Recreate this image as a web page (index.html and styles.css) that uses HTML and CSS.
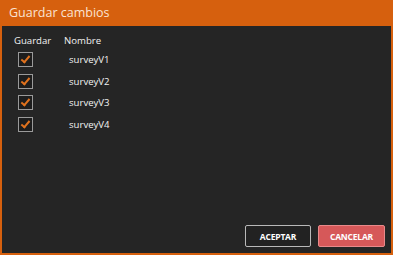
FILE: index.html
```html
<!DOCTYPE html>
<html lang="es">
<head>
  <meta charset="UTF-8" />
  <title>Guardar cambios</title>
  <link rel="stylesheet" href="styles.css">
</head>
<body>
  <div class="dialog">
    <div class="titlebar">Guardar cambios</div>
    <div class="content">
      <div class="grid">
        <div class="head">Guardar</div>
        <div class="head name">Nombre</div>

        <div class="cell"><span class="check"></span></div>
        <div class="cell name">surveyV1</div>
        <div class="cell"><span class="check"></span></div>
        <div class="cell name">surveyV2</div>
        <div class="cell"><span class="check"></span></div>
        <div class="cell name">surveyV3</div>
        <div class="cell"><span class="check"></span></div>
        <div class="cell name">surveyV4</div>
      </div>
      <div class="actions">
        <button type="button" class="btn">ACEPTAR</button>
        <button type="button" class="btn btn-cancel">CANCELAR</button>
      </div>
    </div>
  </div>
</body>
</html>
```

FILE: styles.css
```css
body {
  margin: 0;
  font-family: 'Open Sans', 'Noto Sans', sans-serif;
  background: #252525;
}

.dialog {
  width: 393px;
  height: 255px;
  box-sizing: border-box;
  background: #d6600e;
  padding: 0 2px 2px 2px;
  display: flex;
  flex-direction: column;
}

.titlebar {
  height: 26px;
  line-height: 26px;
  padding-left: 7px;
  color: #fbe3d2;
  font-size: 12.5px;
}

.content {
  flex: 1;
  background: #252525;
  display: flex;
  flex-direction: column;
  padding: 7px 0 0 12px;
}

.grid {
  display: grid;
  grid-template-columns: 49px auto;
  grid-template-rows: 16px;
  grid-auto-rows: 21.5px;
  color: #f2f2f2;
  font-size: 9.6px;
}

.head {
  line-height: 16px;
  height: 16px;
}

.cell {
  display: flex;
  align-items: center;
}

.name {
  padding-left: 1px;
}

.cell.name {
  padding-left: 6px;
}

.check {
  width: 13px;
  height: 13px;
  margin-left: 4px;
  border: 1px solid #9a9a9a;
  background: #1d1d1d;
  position: relative;
}

.check::after {
  content: "";
  position: absolute;
  left: 3.5px;
  top: 1px;
  width: 3px;
  height: 7px;
  border-right: 2px solid #e0721e;
  border-bottom: 2px solid #e0721e;
  transform: rotate(40deg);
}

.actions {
  margin-top: auto;
  display: flex;
  justify-content: flex-end;
  gap: 7px;
  padding: 0 6px 6px 0;
}

.btn {
  width: 66px;
  height: 22px;
  border: 1px solid #b9b9b9;
  border-radius: 2px;
  background: #222;
  color: #fff;
  font-family: 'Open Sans', sans-serif;
  font-weight: bold;
  font-size: 8.5px;
  letter-spacing: -0.2px;
  cursor: pointer;
}

.btn-cancel {
  background: #d65859;
  border-color: #e9898a;
  width: 67px;
}
```
